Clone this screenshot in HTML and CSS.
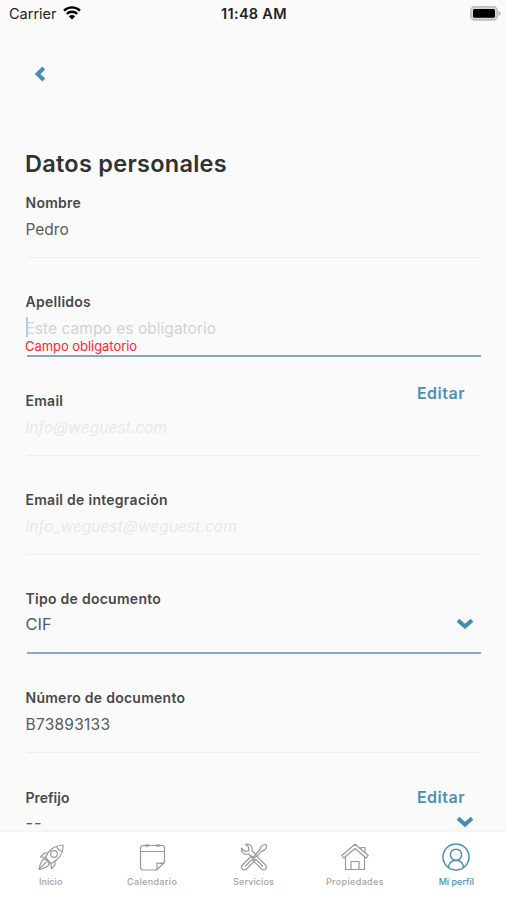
FILE: index.html
```html
<!DOCTYPE html>
<html lang="es">

<head>
  <meta charset="utf-8">
  <title>Datos personales</title>
  <link rel="stylesheet" href="styles.css">
</head>

<body>
  <div class="app">
    <!-- Status bar -->
    <div class="status-bar">
      <div class="carrier">
        <span>Carrier</span>
        <svg class="wifi" viewBox="0 0 18 14">
          <path d="M1 4.700a11.400 11.400 0 0 1 16 0M3.800 7.900a7.400 7.400 0 0 1 10.400 0" fill="none" stroke="#000" stroke-width="2.400" />
          <path d="M9 13.600L5.900 10.400a4.400 4.400 0 0 1 6.200 0z" />
        </svg>
      </div>
      <div class="time">11:48 AM</div>
      <svg class="battery" viewBox="0 0 31 15">
        <path d="M28.500 5c3 1 3 4 0 5z" fill="#b9b9b9" />
        <rect x=".8" y=".8" width="26.400" height="13.200" rx="3.800" fill="#d6d6d6" stroke="#bbb" stroke-width="1.400" />
        <rect x="3" y="3" width="22" height="8.800" rx="1.500" />
      </svg>
    </div>

    <div class="content">
      <a class="back" href="#" aria-label="Volver">
        <svg viewBox="0 0 12 16"><path d="M9.800 2L3.600 8l6.200 6" /></svg>
      </a>
      <h1>Datos personales</h1>

      <!-- Form fields -->
      <form class="fields">
        <div class="field">
          <label>Nombre</label>
          <div class="value">Pedro</div>
        </div>
        <div class="field active">
          <label>Apellidos</label>
          <div class="value placeholder"><i class="caret"></i>Este campo es obligatorio</div>
          <div class="error">Campo obligatorio</div>
        </div>
        <div class="field">
          <label>Email</label>
          <a class="edit" href="#">Editar</a>
          <div class="value disabled">info@weguest.com</div>
        </div>
        <div class="field">
          <label>Email de integración</label>
          <div class="value disabled">info_weguest@weguest.com</div>
        </div>
        <div class="field active select">
          <label>Tipo de documento</label>
          <div class="value">
            <span>CIF</span>
            <svg class="chevron" viewBox="0 0 18 12"><path d="M2 2.200l7 6.400 7-6.400" /></svg>
          </div>
        </div>
        <div class="field">
          <label>Número de documento</label>
          <div class="value number">B73893133</div>
        </div>
        <div class="field select">
          <label class="tight">Prefijo</label>
          <a class="edit" href="#">Editar</a>
          <div class="value">
            <span class="dashes">--</span>
            <svg class="chevron" viewBox="0 0 18 12"><path d="M2 2.200l7 6.400 7-6.400" /></svg>
          </div>
        </div>
      </form>
    </div>

    <!-- Bottom tabs -->
    <nav class="tabs">
      <a class="tab" href="#">
        <svg viewBox="0 0 28 28">
          <path d="M8.500 14.500C11 7.500 17.500 2.500 26 2c.5 7.500-4 14.500-12 18.500z" />
          <path d="M19.500 2.800c.8 3.200 2.700 5 6 5.700" />
          <circle cx="17" cy="11" r="3.300" />
          <path d="M11 10H7.500L3.500 14l5 .5M18 17.800V22l-3.500 3.500-.5-5" />
          <path d="M7.500 15.500C4 17.500 3 21 2 26.500c5.500-1 9-2.500 10.500-6z" />
          <path d="M9 19l-7 7.500" />
        </svg>
        <span>Inicio</span>
      </a>
      <a class="tab wide" href="#">
        <svg viewBox="0 0 28 28">
          <path d="M18.500 27H5a2.500 2.500 0 0 1-2.500-2.500V5A2.500 2.500 0 0 1 5 2.500h19A2.500 2.500 0 0 1 26.500 5v14.500zM2.500 8.500h24M18.500 27c.8-2 .8-4 .3-7 2.500.5 5.200.5 7.700-.5" />
          <path d="M8 1v3M10 1v3M19 1v3M21 1v3" />
        </svg>
        <span>Calendario</span>
      </a>
      <a class="tab" href="#">
        <svg viewBox="0 0 28 28">
          <path d="M5.500 1.500C9.500 0 13 3.500 12 7.500l4 4-3.500 3.500-4-4C4.500 12.500.8 9 1.500 5.200L5 8.500 8.800 7.800 8.600 4z" />
          <path d="M15.500 11.500l4.500-5c.2-2.500 2-4.500 5.500-5l1.200 1.200c-.5 3.500-2.500 5.300-5 5.500l-4.500 5" />
          <path d="M11.500 13l4 4-9 9c-3 2.500-6.500-1-4-4zM5 23.500l7-7M16.500 13l-4 4 9 9c3 2.500 6.500-1 4-4zM23 23.500l-7-7" />
        </svg>
        <span>Servicios</span>
      </a>
      <a class="tab wide" href="#">
        <svg viewBox="0 0 28 28">
          <path d="M14 1.200L.8 12.500 2.800 15 14 5.500 25.200 15l2-2.500z" />
          <path d="M4.500 13.800V26.500h19V13.800M10 26.500V18.500h8v8M20 6V4.500h4V9.700" />
        </svg>
        <span>Propiedades</span>
      </a>
      <a class="tab selected" href="#">
        <svg viewBox="0 0 28 28">
          <circle cx="14" cy="14" r="13" />
          <circle cx="14" cy="11.800" r="5.600" />
          <path d="M6.500 24.500c.5-4.500 3.500-7.300 7.500-7.300s7 2.800 7.500 7.300" />
        </svg>
        <span>Mi perfil</span>
      </a>
    </nav>
  </div>
</body>

</html>
```
FILE: styles.css
```css
* {
  margin: 0;
  padding: 0;
  box-sizing: border-box;
}

body {
  font-family: Inter, "Liberation Sans", sans-serif;
  background-color: #fafafa;
  color: #303233;
}

a {
  text-decoration: none;
}

.app {
  display: flex;
  flex-direction: column;
  height: 900px;
  overflow: hidden;
}

/* Status bar */
.status-bar {
  display: grid;
  grid-template-columns: 1fr auto 1fr;
  align-items: center;
  height: 27px;
  padding: 0 6px 0 9px;
  color: #222;
}

.carrier {
  display: flex;
  align-items: center;
  gap: 6px;
  font-size: 14.5px;
}

.wifi {
  width: 18px;
  height: 14px;
  margin-top: -2px;
}

.time {
  margin-right: 2px;
  font-size: 14.5px;
  font-weight: 600;
  letter-spacing: 0.3px;
}

.battery {
  justify-self: end;
  width: 31px;
  height: 15px;
  margin-top: -1px;
}

/* Page content */
.content {
  flex: 1;
  min-height: 0;
  padding: 38px 26px 0 25px;
}

.back {
  display: block;
  width: 12px;
  height: 16px;
  margin: 1px 0 0 9px;
}

.back svg {
  display: block;
  width: 12px;
  height: 16px;
}

.back path,
.chevron path {
  fill: none;
  stroke: #468eae;
  stroke-width: 4;
}

h1 {
  margin-top: 66px;
  font-size: 23.5px;
  font-weight: 600;
  line-height: 32px;
  letter-spacing: 0.27px;
}

.fields {
  margin-top: 13px;
  padding-left: 2px;
}

/* Form field */
.field {
  display: grid;
  grid-template-columns: 1fr auto;
  grid-template-rows: 19px 34px 12px;
  height: 65px;
  margin-bottom: 34.1px;
  border-bottom: 1px solid #ededee;
}

.field.active {
  border-bottom: 2px solid #88a7be;
}

.field label {
  margin-left: -1.5px;
  font-size: 14px;
  font-weight: 600;
  line-height: 19px;
  letter-spacing: 0.27px;
  color: #48494a;
}

.field label.tight {
  letter-spacing: 0;
}

.value {
  grid-column: 1 / 3;
  grid-row: 2;
  margin-left: -1.5px;
  font-size: 15.5px;
  line-height: 35px;
  color: #5a5b5c;
}

.value.placeholder {
  display: flex;
  align-items: center;
  letter-spacing: 0.04px;
  color: #d2d2d4;
}

.value.number {
  letter-spacing: 0.25px;
}

.caret {
  width: 2px;
  height: 20px;
  margin: -3px -2px 0 0;
  background-color: #bfc5f0;
}

.value.disabled {
  font-style: italic;
  letter-spacing: 0.05px;
  color: #e8e8ea;
}

.error {
  grid-column: 1 / 3;
  grid-row: 3;
  margin: -7px 0 0 -2px;
  font-size: 13px;
  line-height: 16px;
  letter-spacing: -0.05px;
  color: #f5282d;
}

.edit {
  grid-column: 2;
  grid-row: 1;
  margin: -8px 16px 0 0;
  font-size: 16px;
  font-weight: 600;
  line-height: 20px;
  letter-spacing: 0.5px;
  color: #4c91b1;
}

.select .edit {
  margin-top: -1px;
}

.select .value {
  display: flex;
  justify-content: space-between;
  align-items: center;
  height: 32px;
  padding-right: 7px;
  font-size: 16.5px;
  line-height: 20px;
}

.dashes {
  letter-spacing: 0.8px;
}

.chevron {
  width: 18px;
  height: 12px;
  margin-top: -1px;
}

/* Bottom tabs */
.tabs {
  position: relative;
  display: flex;
  height: 68px;
  background-color: #fff;
  box-shadow: 0 -1px 3px rgba(0, 0, 0, 0.04);
}

.tab {
  display: flex;
  flex: 1;
  flex-direction: column;
  align-items: center;
  padding-top: 11px;
  font-size: 9px;
  font-weight: 500;
  line-height: 12px;
  letter-spacing: 0.1px;
  color: #a3a3a3;
}

.tab.wide {
  letter-spacing: 0.35px;
}

.tab svg {
  width: 28px;
  height: 28px;
  margin-bottom: 5px;
  fill: none;
  stroke: #999;
  stroke-width: 1.2;
  stroke-linejoin: round;
}

.tab.selected {
  letter-spacing: 0;
  color: #4c91b1;
}

.tab.selected svg {
  stroke: #4c91b1;
  stroke-width: 1.5;
}
```
